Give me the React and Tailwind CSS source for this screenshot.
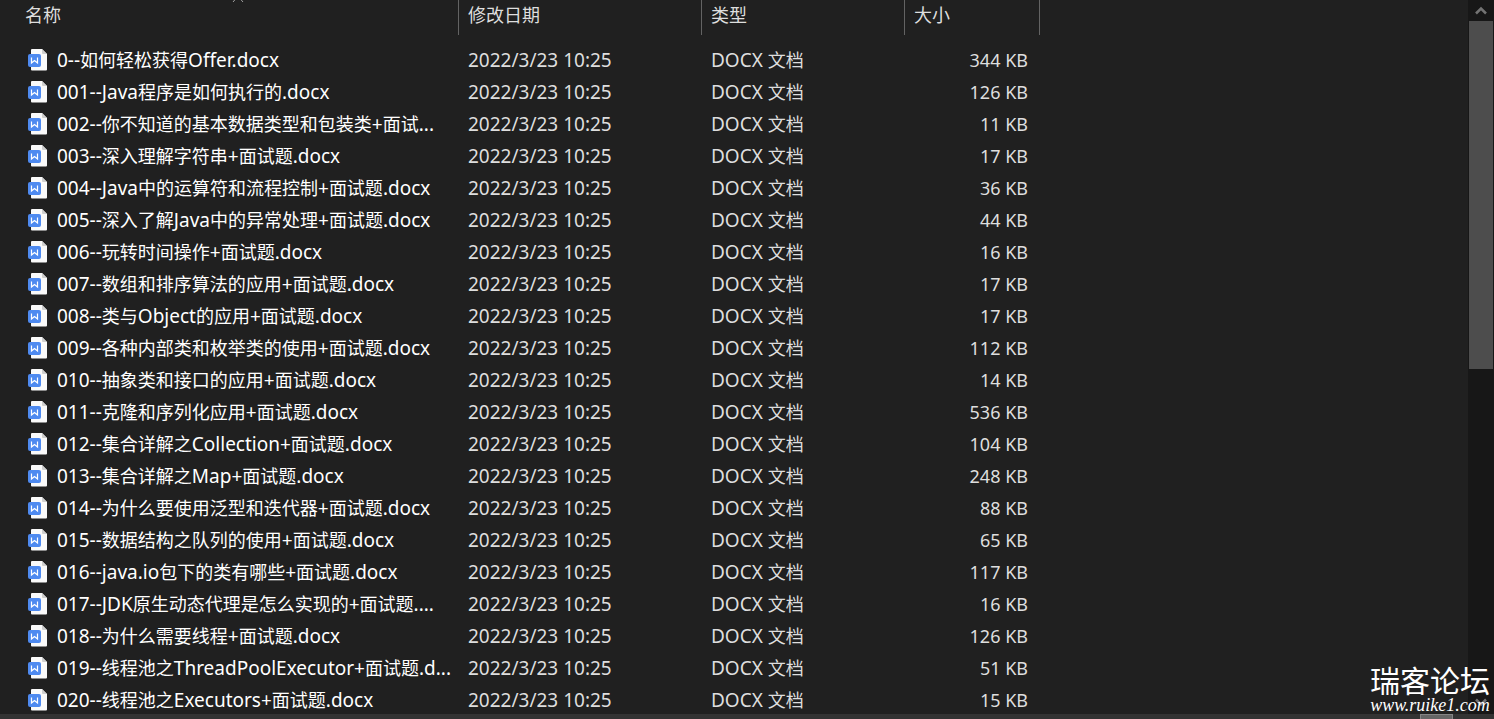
import React from 'react';

const files = [
  { name: '0--如何轻松获得Offer.docx', size: 344 },
  { name: '001--Java程序是如何执行的.docx', size: 126 },
  { name: '002--你不知道的基本数据类型和包装类+面试...', size: 11 },
  { name: '003--深入理解字符串+面试题.docx', size: 17 },
  { name: '004--Java中的运算符和流程控制+面试题.docx', size: 36 },
  { name: '005--深入了解Java中的异常处理+面试题.docx', size: 44 },
  { name: '006--玩转时间操作+面试题.docx', size: 16 },
  { name: '007--数组和排序算法的应用+面试题.docx', size: 17 },
  { name: '008--类与Object的应用+面试题.docx', size: 17 },
  { name: '009--各种内部类和枚举类的使用+面试题.docx', size: 112 },
  { name: '010--抽象类和接口的应用+面试题.docx', size: 14 },
  { name: '011--克隆和序列化应用+面试题.docx', size: 536 },
  { name: '012--集合详解之Collection+面试题.docx', size: 104 },
  { name: '013--集合详解之Map+面试题.docx', size: 248 },
  { name: '014--为什么要使用泛型和迭代器+面试题.docx', size: 88 },
  { name: '015--数据结构之队列的使用+面试题.docx', size: 65 },
  { name: '016--java.io包下的类有哪些+面试题.docx', size: 117 },
  { name: '017--JDK原生动态代理是怎么实现的+面试题....', size: 16 },
  { name: '018--为什么需要线程+面试题.docx', size: 126 },
  { name: '019--线程池之ThreadPoolExecutor+面试题.d...', size: 51 },
  { name: '020--线程池之Executors+面试题.docx', size: 15 }
];

const columns = [
  { label: '名称', pad: 'pl-[25px]' },
  { label: '修改日期', pad: 'pl-[9px]' },
  { label: '类型', pad: 'pl-[9px]' },
  { label: '大小', pad: 'pl-[9px]' }
];

// Latin runs are set a little larger than the Chinese around them
const MixedText = ({ text }) => (
  <span className="whitespace-pre">
    {text.split(/([\x20-\x7e]+)/).filter(Boolean).map((part, index) => (
      <span key={index} className={/[\x20-\x7e]/.test(part) ? 'text-[19px]' : 'text-lg'}>
        {part}
      </span>
    ))}
  </span>
);

const DocIcon = () => (
  <svg className="shrink-0" width="20" height="24" viewBox="0 0 20 24" aria-hidden="true">
    <path d="M4 1H14l5 5V21.5a1 1 0 0 1-1 1H4a1 1 0 0 1-1-1V2A1 1 0 0 1 4 1Z" fill="#fafafa" />
    <path d="M14 1l5 5H15a1 1 0 0 1-1-1Z" fill="#cfcfcf" />
    <rect x="0" y="6" width="13" height="13" rx="2" fill="#4e8af0" />
    <path d="M3.5 9.5v5.5l3-2.5 3 2.5v-5.5" fill="none" stroke="#fff" strokeWidth="1.2" />
  </svg>
);

const Chevron = ({ down = false }) => (
  <svg width="12" height="9" viewBox="0 0 12 9" className={down ? 'rotate-180' : ''} aria-hidden="true">
    <path d="M1 7.5L6 2.5l5 5" fill="none" stroke="#737373" strokeWidth="2.5" />
  </svg>
);

const FileTable = () => (
  <table className="w-[1040px] table-fixed border-collapse text-left text-[#dedede]">
    <colgroup>
      <col className="w-[459px]" />
      <col className="w-[243px]" />
      <col className="w-[203px]" />
      <col className="w-[135px]" />
    </colgroup>
    <thead>
      <tr className="h-11">
        {columns.map((column, index) => (
          <th key={column.label} className="relative p-0 align-top font-normal">
            <button
              type="button"
              className={`block h-[35px] w-full border-r border-[#636363] pb-1.5 text-left text-lg leading-7 ${column.pad}`}
            >
              {column.label}
            </button>
            {index === 0 && (
              <svg className="absolute top-0 left-1/2 ml-[2px]" width="12" height="3" viewBox="0 0 12 3" aria-hidden="true">
                <path d="M4 -1.5L1 2M8 -1.5l3 3.5" fill="none" stroke="#a0a0a0" />
              </svg>
            )}
          </th>
        ))}
      </tr>
    </thead>
    <tbody>
      {files.map((file) => (
        <tr key={file.name} className="h-8 whitespace-nowrap">
          <td className="p-0 pl-7">
            <div className="flex h-8 items-center gap-[9px] text-lg leading-8 text-white">
              <DocIcon />
              <MixedText text={file.name} />
            </div>
          </td>
          <td className="p-0 pl-[9px] text-[19px] leading-8">2022/3/23 10:25</td>
          <td className="p-0 pl-[9px] text-[19px] leading-8">
            <MixedText text="DOCX 文档" />
          </td>
          <td className="p-0 pr-3 text-right text-lg leading-8">{file.size} KB</td>
        </tr>
      ))}
    </tbody>
  </table>
);

const VerticalScrollbar = () => (
  <div className="flex w-[26px] shrink-0 flex-col bg-[#171717] px-px">
    <button type="button" aria-label="Scroll up" className="flex h-[21px] shrink-0 items-center justify-center">
      <Chevron />
    </button>
    <div className="flex-1">
      <div className="h-[52%] bg-[#4d4d4d]" />
    </div>
    <button type="button" aria-label="Scroll down" className="flex h-6 shrink-0 items-center justify-center">
      <Chevron down />
    </button>
  </div>
);

const Watermark = () => (
  <div className="absolute right-1 bottom-1.5 flex flex-col items-center text-white">
    <span className="text-[30px] leading-8">瑞客论坛</span>
    <span className="font-['Liberation_Serif',serif] text-lg leading-4 italic">www.ruike1.com</span>
  </div>
);

const App = () => {
  return (
    <div className="relative flex h-screen flex-col overflow-hidden bg-[#202020] font-['Noto_Sans','Noto_Sans_CJK_SC',sans-serif]">
      <div className="flex min-h-0 flex-1">
        <main className="min-w-0 flex-1 overflow-hidden">
          <FileTable />
        </main>
        <VerticalScrollbar />
      </div>
      <div className="flex h-[5px] shrink-0 justify-end bg-[#333333] pr-[41px]">
        <div className="w-[33px] border border-b-0 border-[#858585] bg-[#666666]" />
      </div>
      <Watermark />
    </div>
  );
};

export default App;
